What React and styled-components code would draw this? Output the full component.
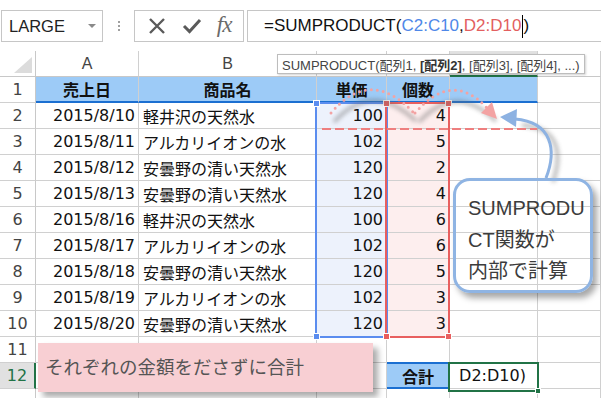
import React from 'react';
import styled, { createGlobalStyle } from 'styled-components';

const GlobalStyle = createGlobalStyle`
  html, body { margin: 0; padding: 0; background: #fff; }
  body { font-family: "DejaVu Sans", "Noto Sans CJK JP", sans-serif; }
  * { box-sizing: border-box; }
`;

const Page = styled.div`
  position: relative;
  width: 601px;
  height: 398px;
  overflow: hidden;
  background: #fff;
`;

/* ---------- formula bar ---------- */
const FormulaBar = styled.div`
  height: 51px;
  display: flex;
  align-items: flex-start;
  padding: 10px 0 0 1px;
`;

const NameBox = styled.div`
  width: 102px;
  height: 32px;
  border: 1px solid #c6c6c6;
  display: flex;
  align-items: center;
  justify-content: space-between;
  padding: 0 6px 0 7px;
  font-family: "Liberation Sans", Arial, sans-serif;
  font-size: 16.5px;
  color: #222;
`;

const DropArrow = styled.span`
  width: 0;
  height: 0;
  border-left: 4px solid transparent;
  border-right: 4px solid transparent;
  border-top: 4px solid #8a8a8a;
`;

const Grip = styled.div`
  width: 31px;
  height: 32px;
  display: flex;
  flex-direction: column;
  align-items: center;
  justify-content: center;
  gap: 2px;
`;

const GripDot = styled.span`
  width: 2px;
  height: 2px;
  background: #a0a0a0;
`;

const ButtonBox = styled.div`
  width: 110px;
  height: 32px;
  border: 1px solid #c6c6c6;
  display: flex;
  align-items: center;
  justify-content: space-around;
  padding: 0 4px;
`;

const Fx = styled.span`
  font-family: "Liberation Serif", "DejaVu Serif", serif;
  font-style: italic;
  font-size: 23px;
  color: #6a6a6a;
  letter-spacing: -1px;
  margin-top: -3px;
`;

const FormulaInput = styled.div`
  margin-left: 3px;
  flex: 1;
  height: 32px;
  border: 1px solid #c6c6c6;
  border-right: none;
  display: flex;
  align-items: center;
  padding-left: 16px;
  font-family: "Liberation Sans", Arial, sans-serif;
  font-size: 17px;
  color: #111;
  white-space: nowrap;
`;

const Ref = styled.span`
  color: ${p => p.$color};
`;

const Caret = styled.span`
  display: inline-block;
  width: 1px;
  height: 23px;
  background: #000;
  margin: 0 0.5px;
`;

/* ---------- sheet grid ---------- */
const Sheet = styled.div`
  display: grid;
  grid-template-columns: 36px 103px 178px 70px 63px 88px 1fr;
  grid-auto-rows: 26px;
`;

const Cell = styled.div`
  border-right: 1px solid #d0d0d0;
  border-bottom: 1px solid #d0d0d0;
  display: flex;
  align-items: center;
  justify-content: ${p => (p.$align === 'right' ? 'flex-end' : p.$align === 'center' ? 'center' : 'flex-start')};
  padding: 0 ${p => (p.$align === 'right' ? '3px' : '4px')};
  background: ${p => p.$bg || '#fff'};
  font-size: 16px;
  color: #111;
  white-space: nowrap;
  overflow: hidden;
`;

const Corner = styled.div`
  border-right: 1px solid #c8c8c8;
  border-bottom: 1px solid #c8c8c8;
  display: flex;
  align-items: flex-end;
  justify-content: flex-end;
  padding: 0 3px 3px 0;
`;

const CornerTriangle = styled.span`
  width: 18px;
  height: 16px;
  background: #dcdcdc;
  clip-path: polygon(100% 0, 100% 100%, 0 100%);
`;

const ColHead = styled.div`
  border-right: 1px solid #d0d0d0;
  border-bottom: ${p => (p.$active ? '2px solid #217346' : '1px solid #c8c8c8')};
  background: ${p => (p.$active ? '#e1e1e1' : '#fff')};
  display: flex;
  align-items: center;
  justify-content: center;
  font-family: "Liberation Sans", Arial, sans-serif;
  font-size: 16px;
  color: #444;
`;

const RowHead = styled.div`
  border-right: ${p => (p.$active ? '2px solid #217346' : '1px solid #c8c8c8')};
  border-bottom: 1px solid #d0d0d0;
  background: ${p => (p.$active ? '#e1e1e1' : '#fff')};
  display: flex;
  align-items: center;
  justify-content: center;
  font-size: 16px;
  color: ${p => (p.$active ? '#217346' : '#444')};
`;

const TitleCell = styled(Cell)`
  background: #9dcbf7;
  border-bottom: 2px solid #1b6fd1;
  font-family: "Noto Sans CJK JP", sans-serif;
  font-weight: 700;
  justify-content: center;
`;

const TotalCell = styled(Cell)`
  background: #9dcbf7;
  border-top: 2px solid #1b6fd1;
  border-bottom: 2px solid #1b6fd1;
  font-family: "Noto Sans CJK JP", sans-serif;
  font-weight: 700;
  justify-content: center;
  margin-top: -1px;
`;

const JpText = styled.span`
  font-family: "Noto Sans CJK JP", sans-serif;
`;

/* ---------- overlays ---------- */
const RangeBox = styled.div`
  position: absolute;
  left: ${p => p.$x}px;
  top: ${p => p.$y}px;
  width: ${p => p.$w}px;
  height: ${p => p.$h}px;
  border: 2px solid ${p => p.$color};
  pointer-events: none;
`;

const Handle = styled.span`
  position: absolute;
  width: 7px;
  height: 7px;
  background: ${p => p.$color};
  border: 1px solid #fff;
  ${p => (p.$top ? 'top: -4px;' : 'bottom: -4px;')}
  ${p => (p.$left ? 'left: -4px;' : 'right: -4px;')}
`;

const ActiveBox = styled.div`
  position: absolute;
  left: 448px;
  top: 362px;
  width: 91px;
  height: 30px;
  border: 2px solid #217346;
`;

const FillHandle = styled.span`
  position: absolute;
  right: -4px;
  bottom: -4px;
  width: 6px;
  height: 6px;
  background: #217346;
  border: 1px solid #fff;
`;

const Tooltip = styled.div`
  position: absolute;
  left: 277px;
  top: 54px;
  height: 20px;
  padding: 0 4px;
  background: #fff;
  border: 1px solid #bdbdbd;
  box-shadow: 1px 1px 2px rgba(0, 0, 0, 0.18);
  display: flex;
  align-items: center;
  font-family: "Liberation Sans", "Noto Sans CJK JP", sans-serif;
  font-size: 13px;
  color: #444;
  white-space: nowrap;
`;

const Bold = styled.b`
  font-weight: 700;
  color: #333;
`;

const Callout = styled.div`
  position: absolute;
  left: 453px;
  top: 178px;
  width: 140px;
  height: 115px;
  border: 3px solid #8fb4e3;
  border-radius: 17px;
  box-shadow: 4px 5px 6px rgba(0, 0, 0, 0.35);
  padding: 12px 0 0 12px;
  font-family: "Liberation Sans", "Noto Sans CJK JP", sans-serif;
  font-size: 20px;
  line-height: 31.5px;
  color: #3c3c3c;
`;

const Note = styled.div`
  position: absolute;
  left: 38px;
  top: 343px;
  width: 335px;
  height: 49px;
  background: #f8cfd3;
  box-shadow: 5px 5px 6px rgba(0, 0, 0, 0.33);
  display: flex;
  align-items: center;
  padding: 0 0 4px 7px;
  font-family: "Noto Sans CJK JP", sans-serif;
  font-size: 18.5px;
  color: #555;
`;

const Drawing = styled.svg`
  position: absolute;
  left: 0;
  top: 0;
  pointer-events: none;
`;

const data = [
  ['2015/8/10', '軽井沢の天然水', 100, 4],
  ['2015/8/11', 'アルカリイオンの水', 102, 5],
  ['2015/8/12', '安曇野の清い天然水', 120, 2],
  ['2015/8/13', '安曇野の清い天然水', 120, 4],
  ['2015/8/16', '軽井沢の天然水', 100, 6],
  ['2015/8/17', 'アルカリイオンの水', 102, 6],
  ['2015/8/18', '安曇野の清い天然水', 120, 5],
  ['2015/8/19', 'アルカリイオンの水', 102, 3],
  ['2015/8/20', '安曇野の清い天然水', 120, 3],
];

/* column letters hidden beneath the tooltip are left blank */
const columns = [
  { key: 'A', label: 'A' },
  { key: 'B', label: 'B' },
  { key: 'C', label: '' },
  { key: 'D', label: '' },
  { key: 'E', label: '', active: true },
  { key: 'F', label: '' },
];

const BLUE_FILL = '#edf2fc';
const RED_FILL = '#fdeeee';

export default function App() {
  return (
    <Page>
      <GlobalStyle />
      <FormulaBar>
        <NameBox>
          LARGE
          <DropArrow />
        </NameBox>
        <Grip>
          <GripDot />
          <GripDot />
          <GripDot />
        </Grip>
        <ButtonBox>
          <svg width="20" height="20" viewBox="0 0 20 20">
            <path d="M3 3 L17 17 M17 3 L3 17" stroke="#5a5a5a" strokeWidth="2.4" fill="none" />
          </svg>
          <svg width="20" height="20" viewBox="0 0 20 20">
            <path d="M2 10 L7.5 15.5 L18 4" stroke="#5a5a5a" strokeWidth="3" fill="none" />
          </svg>
          <Fx>fx</Fx>
        </ButtonBox>
        <FormulaInput>
          =SUMPRODUCT(<Ref $color="#4f88e8">C2:C10</Ref>,<Ref $color="#e35f5f">D2:D10</Ref>
          <Caret />)
        </FormulaInput>
      </FormulaBar>

      <Sheet>
        <Corner>
          <CornerTriangle />
        </Corner>
        {columns.map(c => (
          <ColHead key={c.key} $active={c.active}>
            {c.label}
          </ColHead>
        ))}

        <RowHead>1</RowHead>
        <TitleCell>売上日</TitleCell>
        <TitleCell>商品名</TitleCell>
        <TitleCell>単価</TitleCell>
        <TitleCell>個数</TitleCell>
        <TitleCell />
        <Cell />

        {data.map((r, i) => (
          <React.Fragment key={i}>
            <RowHead>{i + 2}</RowHead>
            <Cell $align="right">{r[0]}</Cell>
            <Cell>
              <JpText>{r[1]}</JpText>
            </Cell>
            <Cell $align="right" $bg={BLUE_FILL}>
              {r[2]}
            </Cell>
            <Cell $align="right" $bg={RED_FILL}>
              {r[3]}
            </Cell>
            <Cell />
            <Cell />
          </React.Fragment>
        ))}

        <RowHead>11</RowHead>
        <Cell />
        <Cell />
        <Cell />
        <Cell />
        <Cell />
        <Cell />

        <RowHead $active>12</RowHead>
        <Cell />
        <Cell />
        <Cell />
        <TotalCell>合計</TotalCell>
        <Cell>&nbsp;D2:D10)</Cell>
        <Cell />

        <RowHead />
        <Cell />
        <Cell />
        <Cell />
        <Cell />
        <Cell />
        <Cell />
      </Sheet>

      <RangeBox $x={315} $y={102} $w={73} $h={236} $color="#5b8def">
        <Handle $color="#5b8def" $top $left />
        <Handle $color="#5b8def" $left />
      </RangeBox>
      <RangeBox $x={385} $y={102} $w={65} $h={236} $color="#e85f5f">
        <Handle $color="#e85f5f" $top $left />
        <Handle $color="#e85f5f" $top />
        <Handle $color="#e85f5f" $left />
        <Handle $color="#e85f5f" />
      </RangeBox>

      <ActiveBox>
        <FillHandle />
      </ActiveBox>

      <Drawing width="601" height="398" viewBox="0 0 601 398">
        <defs>
          <filter id="soft" x="-20%" y="-20%" width="140%" height="140%">
            <feGaussianBlur stdDeviation="2" />
          </filter>
        </defs>
        <g filter="url(#soft)" opacity="0.45" stroke="#6b6b6b" strokeWidth="4" fill="none">
          <path d="M334 122 Q372 80 416 121" />
          <path d="M419 122 Q456 82 496 121" />
          <path d="M553 182 C563 152 558 128 522 125" />
        </g>
        <line x1="322" y1="129" x2="537" y2="129" stroke="#ee7f7f" strokeWidth="2" strokeDasharray="9 4" />
        <path d="M331 113 Q370 67 413 112" stroke="#f3a3a3" strokeWidth="3" strokeDasharray="0 6" strokeLinecap="round" fill="none" />
        <path d="M415 113 Q452 70 487 108" stroke="#f3a3a3" strokeWidth="3" strokeDasharray="0 6" strokeLinecap="round" fill="none" />
        <polygon points="497,119 481,113 492,102" fill="#f3a3a3" />
        <path d="M546 178 C557 150 552 122 515 119" stroke="#8db2e2" strokeWidth="3" fill="none" />
        <polygon points="500,117 517,109 516,127" fill="#8db2e2" />
      </Drawing>

      <Tooltip>
        SUMPRODUCT(配列1,&nbsp;<Bold>[配列2]</Bold>, [配列3], [配列4], ...)
      </Tooltip>

      <Callout>
        SUMPRODU
        <br />
        CT関数が
        <br />
        内部で計算
      </Callout>

      <Note>それぞれの金額をださずに合計</Note>
    </Page>
  );
}
